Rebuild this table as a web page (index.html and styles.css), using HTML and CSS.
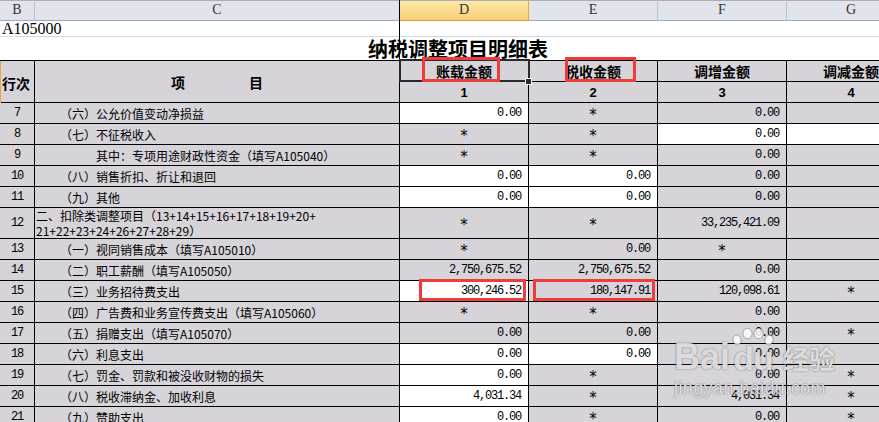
FILE: index.html
```html
<!DOCTYPE html>
<html lang="zh-CN">
<head>
<meta charset="utf-8">
<title>纳税调整项目明细表</title>
<link rel="stylesheet" href="styles.css">
</head>
<body>
<div class="sheet">
  <div class="grid colhead">
    <div>B</div><div>C</div><div class="sel">D</div><div>E</div><div>F</div><div>G</div>
  </div>
  <div class="r-code"><span class="code">A105000</span></div>
  <div class="r-title">纳税调整项目明细表</div>

  <div class="grid thead">
    <div class="span2 first">行次</div>
    <div class="span2 item"><span>项</span><span>目</span></div>
    <div>账载金额</div><div>税收金额</div><div>调增金额</div><div>调减金额</div>
    <div class="dg">1</div><div class="dg">2</div><div class="dg">3</div><div class="dg">4</div>
  </div>

  <div class="grid row">
    <div class="no">7</div><div class="t">（六）公允价值变动净损益</div>
    <div class="n w">0.00</div><div class="s">*</div><div class="n">0.00</div><div></div>
  </div>
  <div class="grid row">
    <div class="no">8</div><div class="t">（七）不征税收入</div>
    <div class="s">*</div><div class="s">*</div><div class="n w">0.00</div><div class="w"></div>
  </div>
  <div class="grid row">
    <div class="no">9</div><div class="t t2">其中：专项用途财政性资金（填写A105040）</div>
    <div class="s">*</div><div class="s">*</div><div class="n">0.00</div><div></div>
  </div>
  <div class="grid row">
    <div class="no">10</div><div class="t">（八）销售折扣、折让和退回</div>
    <div class="n w">0.00</div><div class="n w">0.00</div><div class="n">0.00</div><div></div>
  </div>
  <div class="grid row">
    <div class="no">11</div><div class="t">（九）其他</div>
    <div class="n w">0.00</div><div class="n w">0.00</div><div class="n">0.00</div><div></div>
  </div>
  <div class="grid row tall">
    <div class="no">12</div><div class="t t0"><span class="two">二、扣除类调整项目（13+14+15+16+17+18+19+20+<br>21+22+23+24+26+27+28+29）</span></div>
    <div class="s">*</div><div class="s">*</div><div class="n">33,235,421.09</div><div></div>
  </div>
  <div class="grid row">
    <div class="no">13</div><div class="t">（一）视同销售成本（填写A105010）</div>
    <div class="s">*</div><div class="n">0.00</div><div class="s">*</div><div></div>
  </div>
  <div class="grid row">
    <div class="no">14</div><div class="t">（二）职工薪酬（填写A105050）</div>
    <div class="n">2,750,675.52</div><div class="n">2,750,675.52</div><div class="n">0.00</div><div></div>
  </div>
  <div class="grid row">
    <div class="no">15</div><div class="t">（三）业务招待费支出</div>
    <div class="n w">300,246.52</div><div class="n">180,147.91</div><div class="n">120,098.61</div><div class="s">*</div>
  </div>
  <div class="grid row">
    <div class="no">16</div><div class="t">（四）广告费和业务宣传费支出（填写A105060）</div>
    <div class="s">*</div><div class="s">*</div><div class="n">0.00</div><div></div>
  </div>
  <div class="grid row">
    <div class="no">17</div><div class="t">（五）捐赠支出（填写A105070）</div>
    <div class="n">0.00</div><div class="n">0.00</div><div class="n">0.00</div><div class="s">*</div>
  </div>
  <div class="grid row">
    <div class="no">18</div><div class="t">（六）利息支出</div>
    <div class="n w">0.00</div><div class="n w">0.00</div><div class="n">0.00</div><div></div>
  </div>
  <div class="grid row">
    <div class="no">19</div><div class="t">（七）罚金、罚款和被没收财物的损失</div>
    <div class="n w">0.00</div><div class="s">*</div><div class="n">0.00</div><div class="s">*</div>
  </div>
  <div class="grid row">
    <div class="no">20</div><div class="t">（八）税收滞纳金、加收利息</div>
    <div class="n w">4,031.34</div><div class="s">*</div><div class="n">4,031.34</div><div class="s">*</div>
  </div>
  <div class="grid row">
    <div class="no">21</div><div class="t">（九）赞助支出</div>
    <div class="n w">0.00</div><div class="s">*</div><div class="n">0.00</div><div class="s">*</div>
  </div>

  <div class="freeze"></div>
  <div class="rowsel"></div>
  <div class="selbox"></div>
  <div class="handle"></div>
  <div class="redbox rb1"></div>
  <div class="redbox rb2"></div>
  <div class="redbox rb3"></div>
  <div class="redbox rb4"></div>

  <div class="wm">
    <div class="wm-logo">
      <span class="wm-bai">Bai</span>
      <span class="wm-paw">
        <svg class="toes" width="44" height="18" viewBox="0 0 44 18">
          <ellipse cx="6" cy="12" rx="4" ry="5" transform="rotate(-15 6 12)"/>
          <ellipse cx="16.5" cy="5.5" rx="4.5" ry="5.2"/>
          <ellipse cx="27.5" cy="5.5" rx="4.5" ry="5.2"/>
          <ellipse cx="38" cy="12" rx="4" ry="5" transform="rotate(15 38 12)"/>
        </svg>
        <span class="wm-du">du</span>
      </span>
      <span class="wm-jy">经验</span>
    </div>
    <div class="wm-url">jingyan.baidu.com</div>
  </div>
</div>
</body>
</html>
```
FILE: styles.css
```css
* { box-sizing: border-box; }
html, body { margin: 0; padding: 0; background: #fff; overflow: hidden; }
body { width: 879px; height: 422px; }

.sheet {
  position: relative;
  width: 916px;
  font-family: "Noto Sans CJK SC", sans-serif;
  font-size: 12px;
  color: #000;
}
.grid {
  display: grid;
  grid-template-columns: 35px 365px 129px 129px 129px 129px;
}

/* column letters */
.colhead > div {
  height: 21px;
  line-height: 20px;
  text-align: center;
  font-family: "Liberation Serif", serif;
  font-size: 14px;
  color: #333;
  background: #e1e5eb;
  border-right: 1px solid #b9c3d0;
  border-bottom: 1px solid #9eabbb;
  box-shadow: inset 0 1px 0 #a9afb8;
}
.colhead > .sel {
  background: linear-gradient(#fde9a8, #f8d076);
  border-right-color: #eaa54a;
  border-bottom-color: #e8962e;
}

/* sheet rows 1-2 */
.r-code {
  height: 16px;
  border-bottom: 1px solid #d3d9e4;
}
.code {
  display: block;
  font-family: "Liberation Serif", serif;
  font-size: 16px;
  line-height: 16px;
  padding-left: 2px;
  white-space: nowrap;
}
.r-title {
  height: 24px;
  border-bottom: 1px solid #000;
  text-align: center;
  font-size: 20px;
  font-weight: 700;
  line-height: 23px;
}

/* header rows */
.thead { grid-template-rows: 21px 21px; }
.thead > div {
  background: #d6d3d9;
  border-right: 1px solid #000;
  border-bottom: 1px solid #000;
  display: flex;
  align-items: center;
  justify-content: center;
  font-weight: 700;
  font-size: 14px;
  white-space: nowrap;
}
.thead > .span2 { grid-row: span 2; }
.thead > .item { gap: 64px; }
.thead > .first { justify-content: flex-start; padding-left: 2px; padding-top: 2px; }
.thead > .dg { font-family: "Liberation Sans", sans-serif; font-size: 13px; }

/* body rows */
.row > div {
  height: 21px;
  background: #d6d3d9;
  border-right: 1px solid #000;
  border-bottom: 1px solid #000;
  display: flex;
  align-items: center;
  white-space: nowrap;
  overflow: hidden;
}
.row.tall > div { height: 31px; }
.row > .w { background: #fff; }
.row > .no {
  justify-content: center;
  font-family: "Liberation Mono", monospace;
  font-size: 12px;
  letter-spacing: -1.2px;
}
.row > .t { padding-left: 25px; font-size: 12px; }
.row > .t0 { padding-left: 1px; }
.row > .t2 { padding-left: 61px; }
.two { display: block; line-height: 15px; }
.row > .n {
  justify-content: flex-end;
  padding-right: 7px;
  font-family: "Liberation Mono", monospace;
  font-size: 12px;
  letter-spacing: -1.2px;
}
.row > .s {
  justify-content: center;
  font-family: "DejaVu Sans", sans-serif;
  font-size: 15px;
  line-height: 15px;
  padding-top: 5px;
}

/* overlays */
.freeze { position: absolute; left: 399px; top: 0; width: 1px; height: 61px; background: #000; }
.rowsel { position: absolute; left: 0; top: 61px; width: 1px; height: 42px; background: #f0a540; }
.selbox { position: absolute; left: 399px; top: 59px; width: 131px; height: 23px; border: 2px solid #2a2a2a; }
.handle { position: absolute; left: 525px; top: 78px; width: 7px; height: 7px; background: #2a2a2a; border: 1px solid #fff; }
.redbox { position: absolute; border: 3px solid #f03b3b; }
.rb1 { left: 422px; top: 57px; width: 78px; height: 25px; }
.rb2 { left: 565px; top: 57px; width: 71px; height: 25px; }
.rb3 { left: 419px; top: 279px; width: 107px; height: 22px; }
.rb4 { left: 533px; top: 279px; width: 122px; height: 22px; }

/* watermark */
.wm {
  position: absolute;
  left: 674px;
  top: 328px;
  display: flex;
  flex-direction: column;
  color: rgba(255, 255, 255, 0.8);
  text-shadow: 0 0 1px rgba(60, 60, 60, 0.7), 0 0 2px rgba(60, 60, 60, 0.3);
  font-family: "Liberation Sans", sans-serif;
}
.wm-logo { display: flex; align-items: flex-end; }
.wm-bai { font-size: 36px; font-weight: 700; line-height: 30px; }
.wm-paw { display: flex; flex-direction: column; align-items: center; margin-left: 1px; }
.toes { fill: rgba(255, 255, 255, 0.8); stroke: rgba(60, 60, 60, 0.45); stroke-width: 0.8; }
.wm-du { font-size: 34px; font-weight: 700; line-height: 28px; margin-top: -2px; letter-spacing: -1px; }
.wm-jy { font-family: "Noto Sans CJK SC", sans-serif; font-size: 26px; font-weight: 700; line-height: 28px; margin-left: 8px; }
.wm-url { font-size: 18px; line-height: 20px; margin-top: 6px; letter-spacing: 0.4px; }
```
